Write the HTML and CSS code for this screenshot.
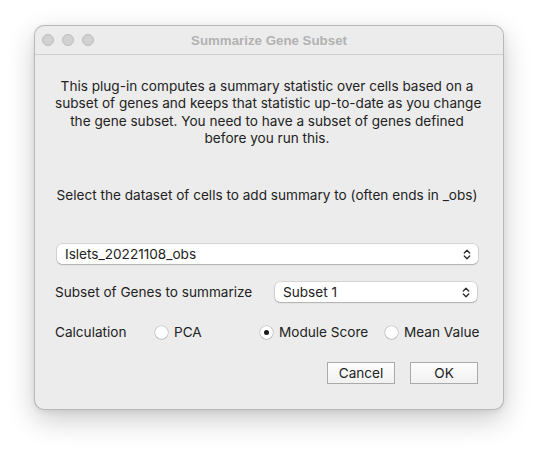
FILE: index.html
```html
<!DOCTYPE html>
<html>
<head>
<meta charset="utf-8">
<link rel="stylesheet" href="styles.css">
</head>
<body>
<div class="window">
  <div class="titlebar">
    <div class="lights">
      <span class="light"></span><span class="light"></span><span class="light"></span>
    </div>
    <div class="title">Summarize Gene Subset</div>
    <div></div>
  </div>
  <div class="content">
    <p class="intro">This plug-in computes a summary statistic over cells based on a<br>subset of genes and keeps that statistic up-to-date as you change<br>the gene subset. You need to have a subset of genes defined<br>before you run this.</p>
    <p class="prompt">Select the dataset of cells to add summary to (often ends in _obs)</p>
    <div class="select select-wide">
      <span>Islets_20221108_obs</span>
      <svg class="chev" width="8" height="11" viewBox="0 0 8 11"><path d="M1.3 4 L4 1.3 L6.7 4 M1.3 7 L4 9.7 L6.7 7" fill="none" stroke="#2a2a2a" stroke-width="1.3" stroke-linecap="round" stroke-linejoin="round"/></svg>
    </div>
    <div class="row">
      <span class="label">Subset of Genes to summarize</span>
      <div class="select select-small">
        <span>Subset 1</span>
        <svg class="chev" width="8" height="11" viewBox="0 0 8 11"><path d="M1.3 4 L4 1.3 L6.7 4 M1.3 7 L4 9.7 L6.7 7" fill="none" stroke="#2a2a2a" stroke-width="1.3" stroke-linecap="round" stroke-linejoin="round"/></svg>
      </div>
    </div>
    <div class="calc">
      <span class="label">Calculation</span>
      <span class="opt"><span class="radio"></span>PCA</span>
      <span class="opt"><span class="radio on"></span>Module Score</span>
      <span class="opt"><span class="radio"></span>Mean Value</span>
    </div>
    <div class="buttons">
      <button class="btn">Cancel</button>
      <button class="btn">OK</button>
    </div>
  </div>
</div>
</body>
</html>
```

FILE: styles.css
```css
html, body {
  margin: 0;
  padding: 0;
  background: #ffffff;
}
html {
  height: 100%;
}
body {
  min-height: 452px;
  box-sizing: border-box;
  font-family: Inter, "Liberation Sans", Arial, sans-serif;
  font-size: 13.6px;
  color: #222222;
  padding: 25px 0 0 34px;
}
.window {
  width: 470px;
  height: 385px;
  box-sizing: border-box;
  background: #ececec;
  border: 1px solid rgba(0, 0, 0, 0.22);
  border-radius: 10px;
  box-shadow: 0 10px 28px rgba(0, 0, 0, 0.2), 0 2px 6px rgba(0, 0, 0, 0.07);
  overflow: hidden;
}
.titlebar {
  height: 28px;
  border-bottom: 1px solid #cfcfcf;
  display: grid;
  grid-template-columns: 1fr auto 1fr;
  align-items: center;
  padding-left: 7px;
  padding-right: 7px;
}
.lights {
  display: flex;
  gap: 8px;
}
.light {
  width: 12px;
  height: 12px;
  box-sizing: border-box;
  border-radius: 50%;
  background: #d1d1d1;
  border: 0.5px solid #bdbdbd;
}
.title {
  font-family: "Liberation Sans", Arial, sans-serif;
  font-weight: bold;
  font-size: 13.3px;
  color: #b2b2b2;
}
.content {
  padding: 23px 24px 0 20px;
}
.intro {
  margin: 0;
  text-align: center;
  line-height: 17.3px;
  white-space: nowrap;
}
.prompt {
  margin: 40px 0 0 0;
  text-align: center;
  line-height: 17px;
  white-space: nowrap;
}
.select {
  height: 20px;
  box-sizing: border-box;
  background: #ffffff;
  border-radius: 5px;
  box-shadow: 0 0 0 0.5px rgba(0, 0, 0, 0.18), 0 1px 1.5px rgba(0, 0, 0, 0.18);
  display: flex;
  align-items: center;
  justify-content: space-between;
  padding: 0 7px 0 8px;
}
.select-wide {
  margin: 40px 1px 0 2px;
}
.row {
  margin-top: 18px;
  display: flex;
  align-items: center;
  height: 20px;
  white-space: nowrap;
}
.select-small {
  margin-left: auto;
  margin-right: 2px;
  width: 202px;
}
.calc {
  margin-top: 20px;
  height: 20px;
  display: grid;
  grid-template-columns: 100px 105px 125px max-content;
  align-items: center;
  white-space: nowrap;
}
.opt {
  display: flex;
  align-items: center;
  gap: 6px;
  white-space: nowrap;
}
.radio {
  flex: none;
  width: 13px;
  height: 13px;
  box-sizing: border-box;
  border-radius: 50%;
  background: #ffffff;
  box-shadow: 0 0 0 0.5px rgba(0, 0, 0, 0.2), 0 0.5px 1px rgba(0, 0, 0, 0.2);
  display: flex;
  align-items: center;
  justify-content: center;
}
.radio.on::after {
  content: "";
  width: 5px;
  height: 5px;
  border-radius: 50%;
  background: #1a1a1a;
}
.buttons {
  margin-top: 20px;
  display: flex;
  justify-content: flex-end;
  gap: 15px;
  padding-right: 1px;
}
.btn {
  width: 68px;
  height: 22px;
  box-sizing: border-box;
  border: 1px solid #aaaaaa;
  background: linear-gradient(#fdfdfd, #f1f1f1);
  font-family: Inter, "Liberation Sans", Arial, sans-serif;
  font-size: 13.6px;
  color: #222222;
  padding: 0;
  border-radius: 0;
}
```
